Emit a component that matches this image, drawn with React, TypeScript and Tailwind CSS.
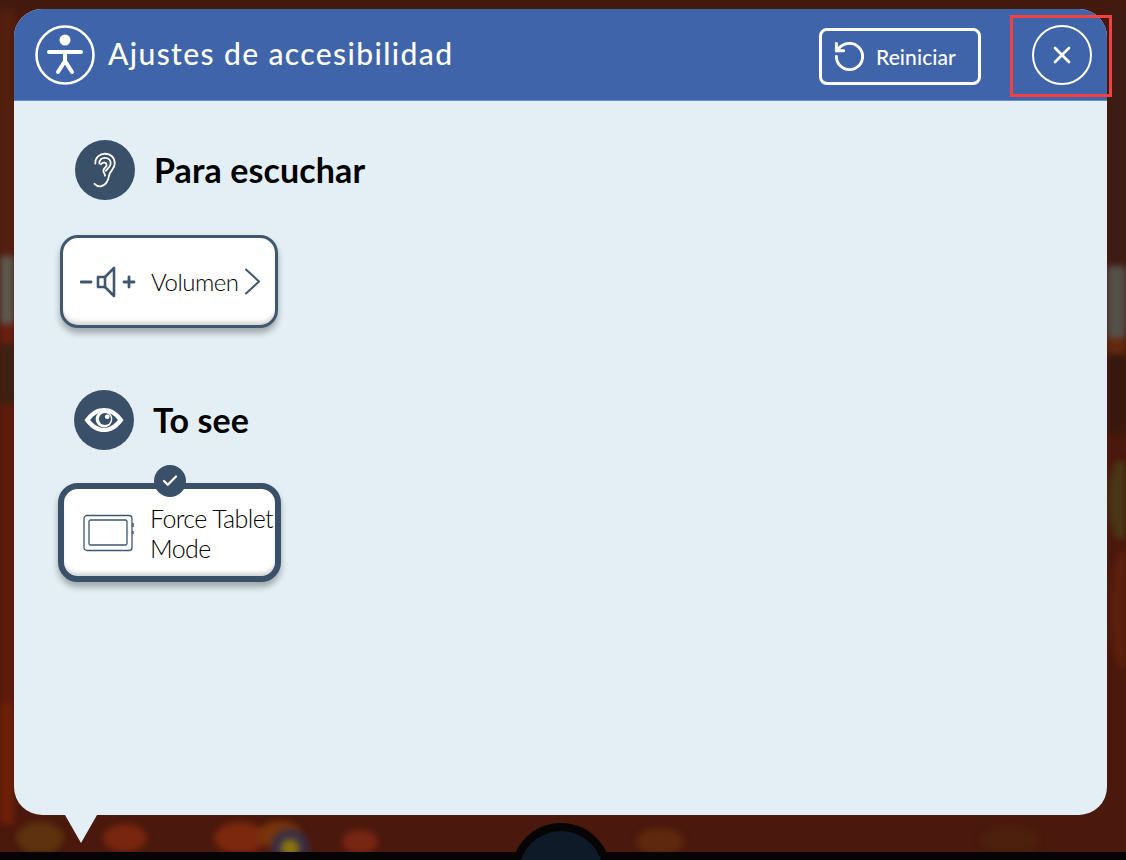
import { Check, RotateCcw, X } from "lucide-react";

const font = "font-['Lato',sans-serif]";

function AccessIcon() {
  return (
    <svg width="60" height="60" viewBox="0 0 60 60" fill="none" stroke="white" strokeLinecap="round">
      <circle cx="30" cy="30" r="28.5" strokeWidth="2.6" />
      <circle cx="30" cy="15" r="5.500" fill="white" stroke="none" />
      <path d="M14 27H46" strokeWidth="4" />
      <path d="M30 27V36L23 47M30 36L37 47" strokeWidth="4" strokeLinejoin="round" />
    </svg>
  );
}

function EarIcon() {
  return (
    <svg width="26" height="42" viewBox="0 0 32 46" fill="none" stroke="white" strokeWidth="2.2" strokeLinecap="round">
      <path d="M4 15C4 7 10 3 16 3C23 3 28 8 28 15C28 22 22 24 21 30C20 36 17 42 11 43C7 43.500 5 42 3 40" />
      <path d="M9 15C9 10 12 8 16 8C20 8 23 11 23 15C23 19 19 21 17 24" />
      <path d="M11 16C13 13 18 13 18 17C18 20 14 20 14 24C14 27 16 27 16 30" />
    </svg>
  );
}

function EyeIcon() {
  return (
    <svg width="42" height="26" viewBox="0 0 44 28" fill="none">
      <path d="M1 14C8 4 15 1 22 1C29 1 36 4 43 14C36 24 29 27 22 27C15 27 8 24 1 14Z" fill="white" />
      <path d="M7 14C12 8 17 5.500 22 5.500C27 5.500 32 8 37 14C32 20 27 22.500 22 22.500C17 22.500 12 20 7 14Z" fill="#3a5068" />
      <circle cx="22" cy="13" r="9" fill="white" />
      <circle cx="23" cy="13" r="6.500" fill="#3a5068" />
      <circle cx="25.500" cy="10.500" r="2.500" fill="white" />
    </svg>
  );
}

function SpeakerIcon() {
  return (
    <svg width="56" height="32" viewBox="0 0 56 32" fill="none" stroke="#3f5870" strokeLinecap="round" strokeLinejoin="round">
      <path d="M1 16H11" strokeWidth="2.8" />
      <path d="M18 11H25V21H18Z" strokeWidth="2.6" />
      <path d="M25 11L34 2V30L25 21" strokeWidth="2.6" />
      <path d="M44 16H54M49 11V21" strokeWidth="2.8" />
    </svg>
  );
}

function TabletIcon() {
  return (
    <svg width="52" height="38" viewBox="0 0 52 38" fill="none" stroke="#3f5870" strokeWidth="1.300">
      <rect x="1" y="1.500" width="48" height="35" rx="3" />
      <rect x="6" y="6" width="38" height="25" rx="1.500" />
      <path d="M50 9V13M50 17V20" strokeWidth="1.500" />
    </svg>
  );
}

function SectionHeader({ icon, title }: { icon: React.ReactNode; title: string }) {
  return (
    <div className="flex items-center gap-[19px]">
      <div className="flex h-[60px] w-[60px] items-center justify-center rounded-full bg-[#3a5068]">{icon}</div>
      <h2 className={`${font} text-[34px] font-bold leading-none tracking-[0.1px] text-black`}>{title}</h2>
    </div>
  );
}

function App() {
  return (
    <div className={`relative h-[860px] w-[1126px] overflow-hidden bg-[#4a180c] ${font}`}>
      {/* blurred game board behind the dialog */}
      <svg className="absolute inset-0 blur-[3px]" width="1126" height="860" viewBox="0 0 1126 860">
        <rect x="-10" y="-10" width="1146" height="20" fill="#421a10" />
        <rect x="-10" y="10" width="24" height="246" fill="#54200f" />
        <rect x="-10" y="256" width="24" height="68" fill="#5e5a50" />
        <rect x="-10" y="324" width="24" height="20" fill="#6a2010" />
        <rect x="-10" y="344" width="24" height="60" fill="#3c2212" />
        <rect x="-10" y="404" width="24" height="300" fill="#5e1c0c" />
        <rect x="-10" y="704" width="24" height="120" fill="#6e2008" />
        <rect x="1107" y="10" width="30" height="256" fill="#3c1c14" />
        <rect x="1107" y="266" width="30" height="72" fill="#55504a" />
        <rect x="1107" y="338" width="30" height="16" fill="#642a0f" />
        <rect x="1107" y="354" width="30" height="80" fill="#38180e" />
        <ellipse cx="1120" cy="500" rx="12" ry="40" fill="#4a3616" />
        <ellipse cx="1124" cy="610" rx="14" ry="60" fill="#5c200e" />
        <ellipse cx="40" cy="838" rx="24" ry="16" fill="#5e320e" />
        <ellipse cx="125" cy="838" rx="22" ry="14" fill="#78260f" />
        <ellipse cx="240" cy="838" rx="26" ry="16" fill="#7c280e" />
        <ellipse cx="280" cy="835" rx="22" ry="14" fill="#78340c" />
        <circle cx="290" cy="848" r="19" fill="#3a2f45" />
        <circle cx="290" cy="848" r="9" fill="#8a7410" />
        <ellipse cx="360" cy="842" rx="18" ry="12" fill="#782614" />
        <ellipse cx="660" cy="842" rx="24" ry="14" fill="#5e280e" />
        <ellipse cx="1010" cy="840" rx="30" ry="14" fill="#4c200c" />
      </svg>
      <div className="absolute bottom-0 left-0 h-[8px] w-full bg-[#060404]" />
      <div className="absolute left-[511px] top-[823px] flex h-[100px] w-[100px] justify-center rounded-full bg-[#060404] pt-[8px]">
        <div className="h-[84px] w-[84px] rounded-full bg-[#0f1a28]" />
      </div>

      <div className="relative ml-[14px] pt-[9px]">
        <div className="flex h-[806px] w-[1093px] flex-col overflow-hidden rounded-[28px] bg-[#e3eff4]">
          <header className="flex h-[92px] shrink-0 items-center border-b border-[#6b8fc4] bg-[#3f64a9] pl-[21px] pr-[15px] text-white">
            <AccessIcon />
            <h1 className="ml-[13px] -mt-[2px] text-[30px] font-medium tracking-[1.4px]">Ajustes de accesibilidad</h1>
            <button className="ml-auto mt-[4px] flex h-[57px] w-[162px] items-center gap-[9px] rounded-[8px] border-[3px] border-white pl-[10px] text-[21px] font-medium tracking-[0.1px]">
              <RotateCcw size={35} strokeWidth={2} />
              Reiniciar
            </button>
            <button className="ml-[51px] flex h-[60px] w-[60px] items-center justify-center rounded-full border-[2.5px] border-white">
              <X size={28} strokeWidth={2.3} />
            </button>
          </header>

          <main className="flex flex-col pl-[46px] pt-[39px]">
            <div className="pl-[15px]">
              <SectionHeader icon={<EarIcon />} title="Para escuchar" />
            </div>
            <button className="mt-[35px] flex h-[93px] w-[218px] items-center rounded-[18px] border-[3px] border-[#3f5870] bg-white pl-[17px] shadow-[inset_0_-5px_4px_-2px_rgba(0,0,0,0.18),0_5px_6px_rgba(0,0,0,0.3)]">
              <SpeakerIcon />
              <span className="ml-[15px] text-[24px] font-light tracking-[-0.5px] text-black">Volumen</span>
              <svg width="17" height="27" viewBox="0 0 17 27" fill="none" stroke="#3f5870" strokeWidth="2" strokeLinecap="round" strokeLinejoin="round" className="ml-[5px]">
                <path d="M2 1.500L15 13.500L2 25.500" />
              </svg>
            </button>

            <div className="mt-[62px] pl-[14px]">
              <SectionHeader icon={<EyeIcon />} title="To see" />
            </div>
            <div className="relative -ml-[2px] mt-[33px] flex h-[99px] w-[223px] items-center rounded-[20px] border-[6px] border-[#3a5068] bg-white pl-[19px] shadow-[inset_0_-5px_4px_-2px_rgba(0,0,0,0.18),0_5px_6px_rgba(0,0,0,0.3)]">
              <TabletIcon />
              <span className="ml-[15px] whitespace-nowrap text-left text-[25px] font-light leading-[30px] tracking-[-0.6px] text-black">
                Force Tablet
                <br />
                Mode
              </span>
              <div className="absolute -top-[24px] left-[90px] flex h-[32px] w-[32px] items-center justify-center rounded-full bg-[#3a5068]">
                <Check size={18} strokeWidth={3} className="text-white" />
              </div>
            </div>
          </main>
        </div>
        {/* speech bubble tail */}
        <div className="ml-[51px] h-0 w-0 border-x-[16px] border-t-[28px] border-x-transparent border-t-[#e3eff4]" />
      </div>

      {/* highlight on the close button */}
      <div className="absolute left-[1010px] top-[15px] h-[82px] w-[102px] border-[3px] border-[#f24141]" />
    </div>
  );
}

export default App;
